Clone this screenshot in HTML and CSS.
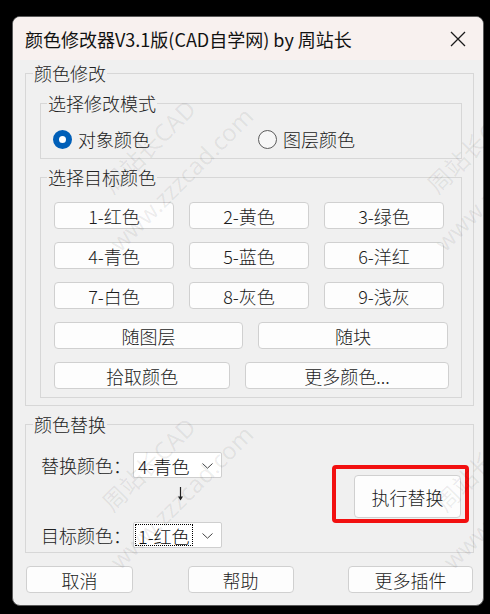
FILE: index.html
```html
<!DOCTYPE html>
<html lang="zh-CN">
<head>
<meta charset="utf-8">
<title>颜色修改器V3.1版</title>
<link rel="stylesheet" href="styles.css">
</head>
<body>
<div class="window">
  <div class="titlebar">
    <span class="title">颜色修改器V3.1版(CAD自学网) by 周站长</span>
    <svg class="close" width="16" height="16" viewBox="0 0 16 16"><path d="M1 1L15 15M15 1L1 15" stroke="#1a1a1a" stroke-width="1.3" fill="none"/></svg>
  </div>
  <div class="content">
    <fieldset class="group outer">
      <legend>颜色修改</legend>
      <fieldset class="group inner mode">
        <legend>选择修改模式</legend>
        <div class="radios">
          <label class="radio"><span class="dot checked"></span>对象颜色</label>
          <label class="radio second"><span class="dot"></span>图层颜色</label>
        </div>
      </fieldset>
      <fieldset class="group inner target">
        <legend>选择目标颜色</legend>
        <div class="rows">
          <div class="row three">
            <button class="btn">1-红色</button><button class="btn">2-黄色</button><button class="btn">3-绿色</button>
          </div>
          <div class="row three">
            <button class="btn">4-青色</button><button class="btn">5-蓝色</button><button class="btn">6-洋红</button>
          </div>
          <div class="row three">
            <button class="btn">7-白色</button><button class="btn">8-灰色</button><button class="btn">9-浅灰</button>
          </div>
          <div class="row">
            <button class="btn w189">随图层</button><button class="btn w190">随块</button>
          </div>
          <div class="row">
            <button class="btn w176">拾取颜色</button><button class="btn w204">更多颜色...</button>
          </div>
        </div>
      </fieldset>
    </fieldset>

    <fieldset class="group replace">
      <legend>颜色替换</legend>
      <div class="replace-body">
        <div class="fields">
          <div class="field">
            <span class="lbl">替换颜色：</span>
            <div class="combo"><span class="val">4-青色</span><svg class="chev" width="11" height="6" viewBox="0 0 11 6"><path d="M0.5 0.5L5.5 5.2L10.5 0.5" stroke="#444" stroke-width="1" fill="none"/></svg></div>
          </div>
          <div class="arrow-row">
            <svg class="arrow" width="9" height="14" viewBox="0 0 9 14"><path d="M4.5 0V12" stroke="#222" stroke-width="1.2"/><path d="M2 9.5L4.5 13.5L7 9.5Z" fill="#222"/></svg>
          </div>
          <div class="field">
            <span class="lbl">目标颜色：</span>
            <div class="combo"><span class="val focus">1-红色</span><svg class="chev" width="11" height="6" viewBox="0 0 11 6"><path d="M0.5 0.5L5.5 5.2L10.5 0.5" stroke="#444" stroke-width="1" fill="none"/></svg></div>
          </div>
        </div>
        <div class="highlight"><button class="btn exec">执行替换</button></div>
      </div>
    </fieldset>

    <div class="footer">
      <button class="btn f1">取消</button>
      <button class="btn f2">帮助</button>
      <button class="btn f3">更多插件</button>
    </div>
  </div>
</div>

<div class="wm-layer">
  <div class="wm wm1">周站长CAD<br>www.zzzcad.com</div>
  <div class="wm wm2">周站长CAD<br>www.zzzcad.com</div>
  <div class="wm wm3">周站长CAD<br>www.zzzcad.com</div>
  <div class="wm wm4">周站长CAD<br>www.zzzcad.com</div>
</div>
</body>
</html>
```

FILE: styles.css
```css
* { box-sizing: border-box; }

html, body {
  margin: 0;
  padding: 0;
  background: #000;
  width: 490px;
  height: 614px;
  overflow: hidden;
  font-family: "Noto Sans CJK SC", "Noto Sans", sans-serif;
  color: #1b1b1b;
}

.window {
  margin: 16px 0 0 12px;
  width: 472px;
  height: 590px;
  border: 1px solid #5a5a5a;
  border-radius: 8px;
  overflow: hidden;
  background: #f0f0f0;
}

.titlebar {
  height: 43px;
  background: #f8f1ef;
  display: flex;
  align-items: center;
  padding-left: 12px;
  padding-right: 17px;
}

.title {
  font-size: 18px;
  line-height: 22px;
  color: #111;
  flex: 1;
  white-space: nowrap;
}

.close { display: block; margin-top: 1px; }

.content {
  display: flex;
  flex-direction: column;
  font-weight: 300;
}

.group {
  margin: 0;
  padding: 0;
  border: 1px solid #d7d7d7;
  min-width: 0;
}

.group > legend {
  font-size: 18px;
  line-height: 20px;
  padding: 0 1px;
  color: #222;
}

.outer {
  margin: 3px 9px 0 12px;
}
.outer > legend { margin-left: 7px; }

.inner { margin-left: 14px; margin-right: 11px; }
.inner > legend { margin-left: 6px; }

.mode { margin-top: 10px; }

.radios {
  display: flex;
  align-items: center;
  height: 20px;
  margin-top: 16px;
  margin-bottom: 9px;
  padding-left: 12px;
}

.radio {
  display: flex;
  align-items: center;
  gap: 6px;
  font-size: 18px;
  line-height: 20px;
  color: #1b1b1b;
  white-space: nowrap;
}
.radio.second { margin-left: 108px; }

.dot {
  width: 19px;
  height: 19px;
  flex: none;
  border-radius: 50%;
  border: 1px solid #5c5c5c;
  background: #f7f7f7;
  display: block;
}
.dot.checked {
  border: 6px solid #005fb8;
  background: #fff;
}

.target { margin-top: 8px; margin-bottom: 7px; }

.rows {
  display: flex;
  flex-direction: column;
  gap: 13px;
  padding: 15px 0 8px 13px;
}

.row {
  display: flex;
  gap: 15px;
}

.btn {
  height: 27px;
  border: 1px solid #d0d0d0;
  border-radius: 4px;
  background: #fdfdfd;
  font-family: "Noto Sans CJK SC", "Noto Sans", sans-serif;
  font-weight: 300;
  font-size: 18px;
  line-height: 20px;
  color: #1b1b1b;
  padding: 0;
  display: flex;
  align-items: center;
  justify-content: center;
  white-space: nowrap;
}

.three .btn { width: 120px; }
.w189 { width: 189px; }
.w190 { width: 190px; }
.w176 { width: 176px; }
.w204 { width: 204px; }

.replace {
  margin: 8px 9px 0 12px;
}
.replace > legend { margin-left: 7px; }

.replace-body {
  display: flex;
  align-items: flex-start;
}

.fields {
  padding: 18px 0 4px 15px;
  display: flex;
  flex-direction: column;
}

.field {
  display: flex;
  align-items: center;
  height: 26px;
}

.lbl {
  width: 92px;
  font-size: 18px;
  line-height: 20px;
  color: #222;
  white-space: nowrap;
}

.combo {
  width: 89px;
  height: 26px;
  background: #fff;
  border: 1px solid #cfcfcf;
  border-radius: 2px;
  display: flex;
  align-items: center;
  padding-left: 1px;
  padding-right: 8px;
  justify-content: space-between;
}

.val {
  font-size: 18px;
  line-height: 20px;
  height: 22px;
  padding: 1px 2px 0 2px;
  border: 1px dotted transparent;
  color: #111;
  white-space: nowrap;
}
.val.focus { border-color: #000; }

.chev { display: block; margin-top: 1px; flex: none; }

.arrow-row {
  height: 44px;
  padding-top: 9px;
  padding-left: 135px;
}
.arrow { display: block; }

.highlight {
  margin-left: auto;
  margin-right: 4px;
  margin-top: 31px;
  border: 4px solid #f21010;
  border-radius: 4px;
  padding: 6px 4px 1px 18px;
}

.exec {
  width: 107px;
  height: 43px;
}

.footer {
  margin-top: 13px;
  display: flex;
  justify-content: space-between;
  padding-left: 13px;
  padding-right: 10px;
}
.f1 { width: 107px; }
.f2 { width: 106px; }
.f3 { width: 125px; }

.wm-layer {
  position: absolute;
  left: 0;
  top: 0;
  width: 490px;
  height: 614px;
  overflow: hidden;
  pointer-events: none;
}

.wm {
  position: absolute;
  width: 260px;
  text-align: center;
  font-family: "Noto Sans", "Noto Sans CJK SC", sans-serif;
  font-size: 24px;
  line-height: 46px;
  color: rgba(0, 0, 0, 0.07);
  transform: translate(-50%, -50%) rotate(-45deg);
  white-space: nowrap;
}
.wm1 { left: 165px; top: 163px; }
.wm2 { left: 490px; top: 163px; }
.wm3 { left: 165px; top: 481px; }
.wm4 { left: 498px; top: 481px; }
```
